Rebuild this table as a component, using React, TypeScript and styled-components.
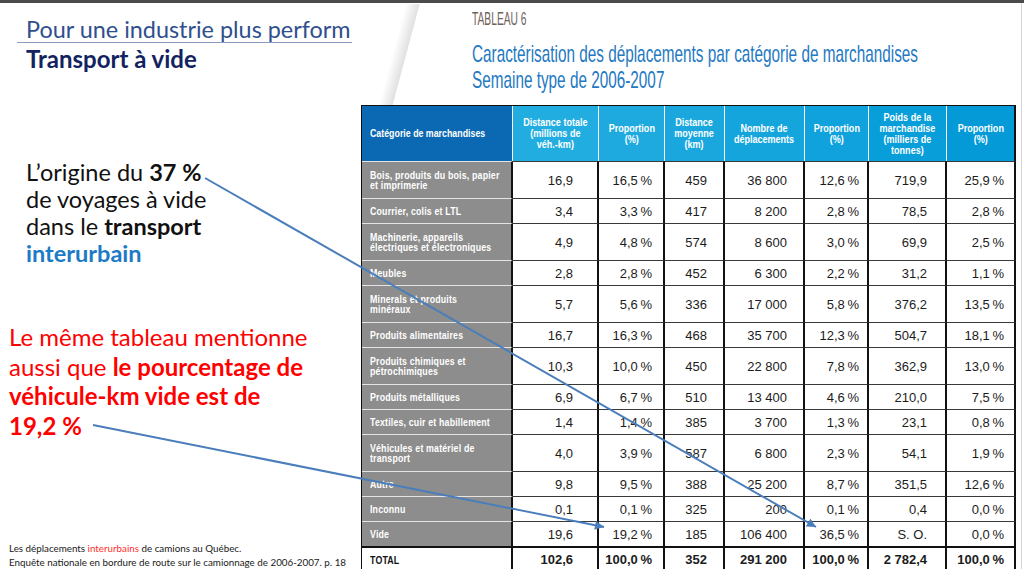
import React from 'react';
import styled, { createGlobalStyle } from 'styled-components';

const calibri = `Lato, "Open Sans", "Liberation Sans", sans-serif`;
const plain = `"Liberation Sans", Arial, sans-serif`;

const GlobalStyle = createGlobalStyle`
  html, body {
    margin: 0;
    padding: 0;
    background: #fff;
  }
  body {
    overflow: hidden;
  }
`;

const Slide = styled.div`
  position: relative;
  width: 1024px;
  height: 569px;
  overflow: hidden;
  background: #fff;
  display: flex;
  flex-direction: column;
`;

const WindowEdge = styled.div`
  height: 3px;
  flex-shrink: 0;
  background: #4b4b4b;
`;

const Body = styled.div`
  flex: 1;
  min-height: 0;
  display: flex;
`;

const TextColumn = styled.div`
  width: 355px;
  flex-shrink: 0;
  display: flex;
  flex-direction: column;
  align-items: flex-start;
  font-family: ${calibri};
`;

const Heading = styled.div`
  margin: 14px 0 0 17px;
  padding-left: 9px;
  width: 326px;
  box-sizing: content-box;
  border-bottom: 1px solid #8b9cc0;
  white-space: nowrap;
  font-size: 23.4px;
  line-height: 25px;
  color: #2f4f8e;
`;

const Subtitle = styled.div`
  margin: 2px 0 0 26px;
  font-size: 24px;
  font-weight: 700;
  line-height: 27px;
  color: #13235f;
`;

const Lead = styled.p`
  margin: 87px 0 0 26px;
  font-size: 23.5px;
  line-height: 27px;
  color: #111;
`;

const Callout = styled.p`
  margin: 55px 0 0 9px;
  font-size: 24px;
  line-height: 29.5px;
  color: #ff0000;
`;

const Strong = styled.b<{ $tone?: string }>`
  font-weight: 700;
  color: ${p => p.$tone ?? 'inherit'};
`;

const Marked = styled.span`
  color: #ff2f2f;
`;

const Source = styled.div`
  margin: auto 0 0 9px;
  font-size: 9.8px;
  line-height: 14px;
  color: #1a1a1a;
  white-space: nowrap;
`;

const Figure = styled.div`
  position: relative;
  width: 660px;
  padding-left: 6px;
  border-right: 1px solid #d4d4d4;

  &::before {
    content: '';
    position: absolute;
    top: 1px;
    left: 37px;
    width: 14px;
    height: 102px;
    background: linear-gradient(to right, rgba(0, 0, 0, 0), rgba(0, 0, 0, 0.12));
    transform: skewX(-15deg);
  }
`;

const Caption = styled.div`
  margin-left: 111px;
  padding-top: 6px;
  white-space: nowrap;
`;

const Label = styled.div`
  font-family: ${plain};
  font-size: 18px;
  line-height: 20px;
  color: #6f625b;
  transform: scaleX(0.57);
  transform-origin: left center;
`;

const Title = styled.div`
  margin-top: 12px;
`;

const TitleLine = styled.div`
  font-family: ${plain};
  font-size: 24px;
  line-height: 26px;
  color: #2479c2;
  transform: scaleX(0.638);
  transform-origin: left center;
`;

const Table = styled.table`
  margin-top: 12px;
  width: 654px;
  table-layout: fixed;
  border-collapse: separate;
  border-spacing: 0;
  border-top: 1px solid #111;
  border-left: 1px solid #111;
`;

const Col = styled.col<{ $w: number }>`
  width: ${p => p.$w}px;
`;

const Squeeze = styled.span<{ $k: number; $center?: boolean }>`
  display: inline-block;
  transform: scaleX(${p => p.$k});
  transform-origin: ${p => (p.$center ? 'center' : 'left')} center;
`;

const HeadRow = styled.tr`
  height: 55px;
`;

const HeadCell = styled.th<{ $tone: string; $first?: boolean; $last?: boolean }>`
  background: ${p => p.$tone};
  color: #fff;
  font: 700 10.5px/11px ${plain};
  text-align: ${p => (p.$first ? 'left' : 'center')};
  padding: ${p => (p.$first ? '0 0 0 8px' : '0')};
  border-right: ${p => (p.$last ? '2px solid #111' : '1px solid #fff')};
  vertical-align: middle;
  white-space: nowrap;
`;

const BodyRow = styled.tr<{ $tall?: boolean }>`
  height: ${p => (p.$tall ? 37 : 25)}px;
`;

const CatCell = styled.th<{ $total?: boolean }>`
  padding: 0 0 0 8px;
  text-align: left;
  vertical-align: middle;
  font: 700 10.5px/10px ${plain};
  letter-spacing: 0.2px;
  color: ${p => (p.$total ? '#111' : '#fff')};
  background: ${p => (p.$total ? '#fff' : '#8d8d8d')};
  border-top: ${p => (p.$total ? '2px solid #111' : '1px solid #e4e4e4')};
  border-right: 2px solid #111;
  white-space: nowrap;
`;

const DataCell = styled.td<{ $pad: number; $total?: boolean }>`
  padding: 0 ${p => p.$pad}px 0 0;
  text-align: right;
  vertical-align: middle;
  font-family: ${plain};
  font-size: 13px;
  font-weight: ${p => (p.$total ? 700 : 400)};
  line-height: 1;
  color: #1c1c1c;
  border-top: ${p => (p.$total ? '2px solid #111' : '1px solid #3a3a3a')};
  border-right: 2px solid #111;
  white-space: nowrap;
`;

const Overlay = styled.svg`
  position: absolute;
  inset: 0;
  width: 100%;
  height: 100%;
  pointer-events: none;
`;

type Column = { head: string[]; w: number; pad: number; tone: string };

const columns: Column[] = [
  { head: ['Distance totale', '(millions de', 'véh.-km)'], w: 86, pad: 24, tone: '#22ade1' },
  { head: ['Proportion', '(%)'], w: 66, pad: 11, tone: '#1eaadf' },
  { head: ['Distance', 'moyenne', '(km)'], w: 60, pad: 16, tone: '#1aa7de' },
  { head: ['Nombre de', 'déplacements'], w: 80, pad: 16, tone: '#15a5dd' },
  { head: ['Proportion', '(%)'], w: 64, pad: 8, tone: '#0fa2dc' },
  { head: ['Poids de la', 'marchandise', '(milliers de', 'tonnes)'], w: 78, pad: 18, tone: '#089eda' },
  { head: ['Proportion', '(%)'], w: 69, pad: 10, tone: '#039ad7' },
];

type Row = { label: string[]; values: string[]; total?: boolean };

const rows: Row[] = [
  { label: ['Bois, produits du bois, papier', 'et imprimerie'], values: ['16,9', '16,5%', '459', '36 800', '12,6%', '719,9', '25,9%'] },
  { label: ['Courrier, colis et LTL'], values: ['3,4', '3,3%', '417', '8 200', '2,8%', '78,5', '2,8%'] },
  { label: ['Machinerie, appareils', 'électriques et électroniques'], values: ['4,9', '4,8%', '574', '8 600', '3,0%', '69,9', '2,5%'] },
  { label: ['Meubles'], values: ['2,8', '2,8%', '452', '6 300', '2,2%', '31,2', '1,1%'] },
  { label: ['Minerals et produits', 'minéraux'], values: ['5,7', '5,6%', '336', '17 000', '5,8%', '376,2', '13,5%'] },
  { label: ['Produits alimentaires'], values: ['16,7', '16,3%', '468', '35 700', '12,3%', '504,7', '18,1%'] },
  { label: ['Produits chimiques et', 'pétrochimiques'], values: ['10,3', '10,0%', '450', '22 800', '7,8%', '362,9', '13,0%'] },
  { label: ['Produits métalliques'], values: ['6,9', '6,7%', '510', '13 400', '4,6%', '210,0', '7,5%'] },
  { label: ['Textiles, cuir et habillement'], values: ['1,4', '1,4%', '385', '3 700', '1,3%', '23,1', '0,8%'] },
  { label: ['Véhicules et matériel de', 'transport'], values: ['4,0', '3,9%', '587', '6 800', '2,3%', '54,1', '1,9%'] },
  { label: ['Autre'], values: ['9,8', '9,5%', '388', '25 200', '8,7%', '351,5', '12,6%'] },
  { label: ['Inconnu'], values: ['0,1', '0,1%', '325', '200', '0,1%', '0,4', '0,0%'] },
  { label: ['Vide'], values: ['19,6', '19,2%', '185', '106 400', '36,5%', 'S. O.', '0,0%'] },
  { label: ['TOTAL'], values: ['102,6', '100,0%', '352', '291 200', '100,0%', '2 782,4', '100,0%'], total: true },
];

const formatValue = (v: string) => v.replace('%', '\u2009%');

function Lines({ lines }: { lines: string[] }) {
  return (
    <>
      {lines.map((line, i) => (
        <React.Fragment key={i}>
          {i > 0 && <br />}
          {line}
        </React.Fragment>
      ))}
    </>
  );
}

function FreightTable() {
  return (
    <Table>
      <colgroup>
        <Col $w={151} />
        {columns.map((c, i) => (
          <Col key={i} $w={c.w} />
        ))}
      </colgroup>
      <thead>
        <HeadRow>
          <HeadCell $tone="#0b68b2" $first>
            <Squeeze $k={0.84}>Catégorie de marchandises</Squeeze>
          </HeadCell>
          {columns.map((c, i) => (
            <HeadCell key={i} $tone={c.tone} $last={i === columns.length - 1}>
              <Squeeze $k={0.86} $center>
                <Lines lines={c.head} />
              </Squeeze>
            </HeadCell>
          ))}
        </HeadRow>
      </thead>
      <tbody>
        {rows.map((row, r) => (
          <BodyRow key={r} $tall={row.label.length > 1}>
            <CatCell scope="row" $total={row.total}>
              <Squeeze $k={0.84}>
                <Lines lines={row.label} />
              </Squeeze>
            </CatCell>
            {row.values.map((v, i) => (
              <DataCell key={i} $pad={columns[i].pad} $total={row.total}>
                {formatValue(v)}
              </DataCell>
            ))}
          </BodyRow>
        ))}
      </tbody>
    </Table>
  );
}

function Arrows() {
  return (
    <Overlay viewBox="0 0 1024 569">
      <defs>
        <marker
          id="head"
          viewBox="0 0 10 10"
          refX="10"
          refY="5"
          markerWidth="10"
          markerHeight="9"
          markerUnits="userSpaceOnUse"
          orient="auto"
        >
          <path d="M0 0 L10 5 L0 10 z" fill="#4a7ebb" />
        </marker>
      </defs>
      <line x1="205" y1="178" x2="816" y2="527" stroke="#4a7ebb" strokeWidth="2" markerEnd="url(#head)" />
      <line x1="93" y1="425" x2="604" y2="527" stroke="#4a7ebb" strokeWidth="2" markerEnd="url(#head)" />
    </Overlay>
  );
}

export default function App() {
  return (
    <>
      <GlobalStyle />
      <Slide>
        <WindowEdge />
        <Body>
          <TextColumn>
            <Heading>Pour une industrie plus perform</Heading>
            <Subtitle>Transport à vide</Subtitle>
            <Lead>
              L’origine du <Strong>37 %</Strong>
              <br />
              de voyages à vide
              <br />
              dans le <Strong>transport</Strong>
              <br />
              <Strong $tone="#1d7ac6">interurbain</Strong>
            </Lead>
            <Callout>
              Le même tableau mentionne
              <br />
              aussi que <Strong>le pourcentage de</Strong>
              <br />
              <Strong>véhicule-km vide est de</Strong>
              <br />
              <Strong>19,2 %</Strong>
            </Callout>
            <Source>
              Les déplacements <Marked>interurbains</Marked> de camions au Québec.
              <br />
              Enquête nationale en bordure de route sur le camionnage de 2006-2007. p. 18
            </Source>
          </TextColumn>
          <Figure>
            <Caption>
              <Label>TABLEAU 6</Label>
              <Title>
                <TitleLine>Caractérisation des déplacements par catégorie de marchandises</TitleLine>
                <TitleLine>Semaine type de 2006-2007</TitleLine>
              </Title>
            </Caption>
            <FreightTable />
          </Figure>
        </Body>
        <Arrows />
      </Slide>
    </>
  );
}
